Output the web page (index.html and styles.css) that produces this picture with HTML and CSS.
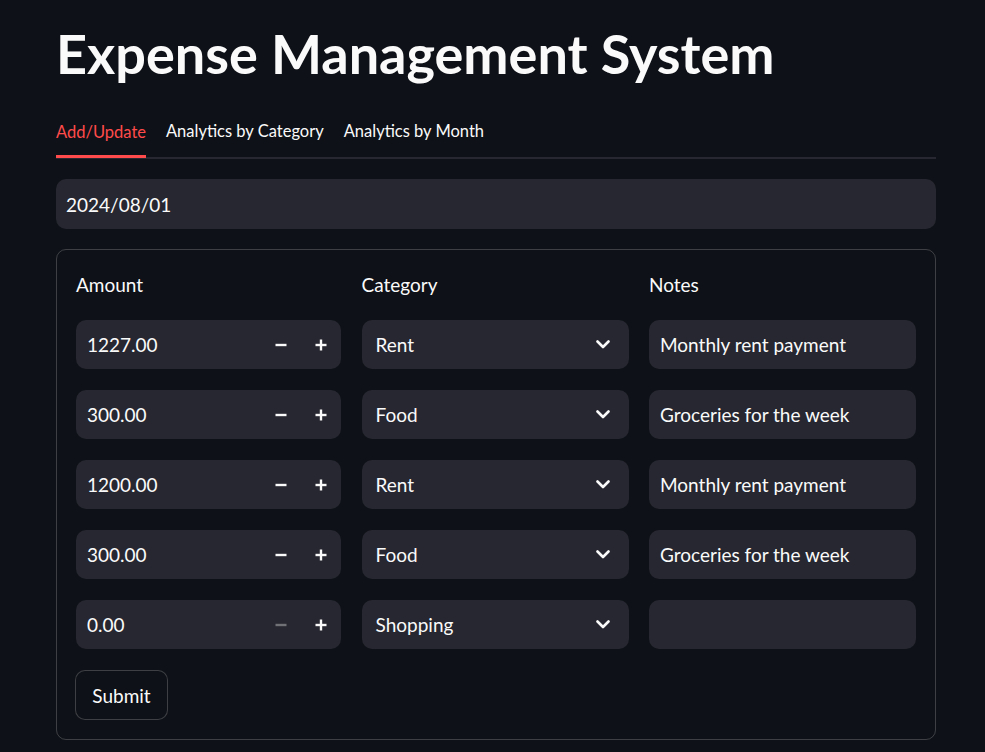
FILE: index.html
```html
<!DOCTYPE html>
<html lang="en">
<head>
<meta charset="utf-8">
<title>Expense Management System</title>
<link rel="stylesheet" href="styles.css">
</head>
<body>
<main class="page">
  <h1 class="title">Expense Management System</h1>
  <nav class="tabs">
    <span class="tab tab-active">Add/Update</span>
    <span class="tab">Analytics by Category</span>
    <span class="tab">Analytics by Month</span>
  </nav>
  <div class="field date-field">2024/08/01</div>
  <form class="form">
    <div class="grid">
      <div class="label">Amount</div>
      <div class="label">Category</div>
      <div class="label">Notes</div>

      <div class="field number"><span class="value">1227.00</span><span class="step"><svg viewBox="0 0 12 12"><line x1="0.5" y1="6" x2="11.5" y2="6"/></svg></span><span class="step"><svg viewBox="0 0 12 12"><line x1="0.5" y1="6" x2="11.5" y2="6"/><line x1="6" y1="0.5" x2="6" y2="11.5"/></svg></span></div>
      <div class="field select"><span class="value">Rent</span><svg class="chev" viewBox="0 0 14 9"><polyline points="1.5,1.5 7,7 12.5,1.5"/></svg></div>
      <div class="field">Monthly rent payment</div>

      <div class="field number"><span class="value">300.00</span><span class="step"><svg viewBox="0 0 12 12"><line x1="0.5" y1="6" x2="11.5" y2="6"/></svg></span><span class="step"><svg viewBox="0 0 12 12"><line x1="0.5" y1="6" x2="11.5" y2="6"/><line x1="6" y1="0.5" x2="6" y2="11.5"/></svg></span></div>
      <div class="field select"><span class="value">Food</span><svg class="chev" viewBox="0 0 14 9"><polyline points="1.5,1.5 7,7 12.5,1.5"/></svg></div>
      <div class="field">Groceries for the week</div>

      <div class="field number"><span class="value">1200.00</span><span class="step"><svg viewBox="0 0 12 12"><line x1="0.5" y1="6" x2="11.5" y2="6"/></svg></span><span class="step"><svg viewBox="0 0 12 12"><line x1="0.5" y1="6" x2="11.5" y2="6"/><line x1="6" y1="0.5" x2="6" y2="11.5"/></svg></span></div>
      <div class="field select"><span class="value">Rent</span><svg class="chev" viewBox="0 0 14 9"><polyline points="1.5,1.5 7,7 12.5,1.5"/></svg></div>
      <div class="field">Monthly rent payment</div>

      <div class="field number"><span class="value">300.00</span><span class="step"><svg viewBox="0 0 12 12"><line x1="0.5" y1="6" x2="11.5" y2="6"/></svg></span><span class="step"><svg viewBox="0 0 12 12"><line x1="0.5" y1="6" x2="11.5" y2="6"/><line x1="6" y1="0.5" x2="6" y2="11.5"/></svg></span></div>
      <div class="field select"><span class="value">Food</span><svg class="chev" viewBox="0 0 14 9"><polyline points="1.5,1.5 7,7 12.5,1.5"/></svg></div>
      <div class="field">Groceries for the week</div>

      <div class="field number"><span class="value">0.00</span><span class="step step-disabled"><svg viewBox="0 0 12 12"><line x1="0.5" y1="6" x2="11.5" y2="6"/></svg></span><span class="step"><svg viewBox="0 0 12 12"><line x1="0.5" y1="6" x2="11.5" y2="6"/><line x1="6" y1="0.5" x2="6" y2="11.5"/></svg></span></div>
      <div class="field select"><span class="value">Shopping</span><svg class="chev" viewBox="0 0 14 9"><polyline points="1.5,1.5 7,7 12.5,1.5"/></svg></div>
      <div class="field"></div>
    </div>
    <button type="button" class="submit">Submit</button>
  </form>
</main>
</body>
</html>
```

FILE: styles.css
```css
* { box-sizing: border-box; }

html, body {
  margin: 0;
  background: #0e1117;
  color: #fafafa;
  font-family: Lato, "Open Sans", sans-serif;
}

.page {
  width: 880px;
  margin-left: 56px;
  padding-top: 22px;
}

.title {
  margin: 0;
  font-size: 54px;
  line-height: 64px;
  font-weight: 700;
  letter-spacing: 0;
}

.tabs {
  display: flex;
  gap: 20px;
  margin-top: 19px;
  border-bottom: 2px solid #262730;
  height: 54px;
}

.tab {
  font-size: 16.5px;
  line-height: 24px;
  height: 52px;
  display: flex;
  align-items: center;
}

.tab-active {
  color: #ff4b4b;
  box-shadow: inset 0 -3px 0 #ff4b4b;
  margin-bottom: -1px;
  height: 53px;
}

.field {
  background: #262730;
  border-radius: 10px;
  height: 49px;
  display: flex;
  align-items: center;
  padding-left: 11px;
  font-size: 19px;
}

.date-field {
  margin-top: 20px;
  height: 50px;
  padding-left: 10px;
}

.form {
  margin-top: 20px;
  border: 1px solid rgba(250, 250, 250, 0.2);
  border-radius: 10px;
  padding: 20px 19px 19px 19px;
  display: flex;
  flex-direction: column;
  gap: 21px;
}

.grid {
  display: grid;
  grid-template-columns: 265px 267px 267px;
  grid-template-rows: 29px repeat(5, 49px);
  column-gap: 20.5px;
  row-gap: 21px;
}

.label {
  font-size: 19px;
  display: flex;
  align-items: center;
}

.value { flex: 1; }

.number { padding-right: 0; }

.step {
  width: 40px;
  height: 100%;
  display: flex;
  align-items: center;
  justify-content: center;
  color: #fafafa;
}

.step svg {
  width: 12px;
  height: 12px;
  stroke: currentColor;
  stroke-width: 2.4;
}

.step-disabled { color: #6f7177; }

.select { padding-left: 14px; padding-right: 19px; }

.chev {
  width: 14px;
  height: 9px;
  fill: none;
  stroke: #fafafa;
  stroke-width: 2.6;
  stroke-linecap: round;
  stroke-linejoin: round;
}

.submit {
  align-self: flex-start;
  width: 93px;
  height: 50px;
  margin-left: -1px;
  background: #0e1117;
  color: #fafafa;
  border: 1px solid rgba(250, 250, 250, 0.2);
  border-radius: 10px;
  font-family: inherit;
  font-size: 19px;
  padding: 0;
}
```
